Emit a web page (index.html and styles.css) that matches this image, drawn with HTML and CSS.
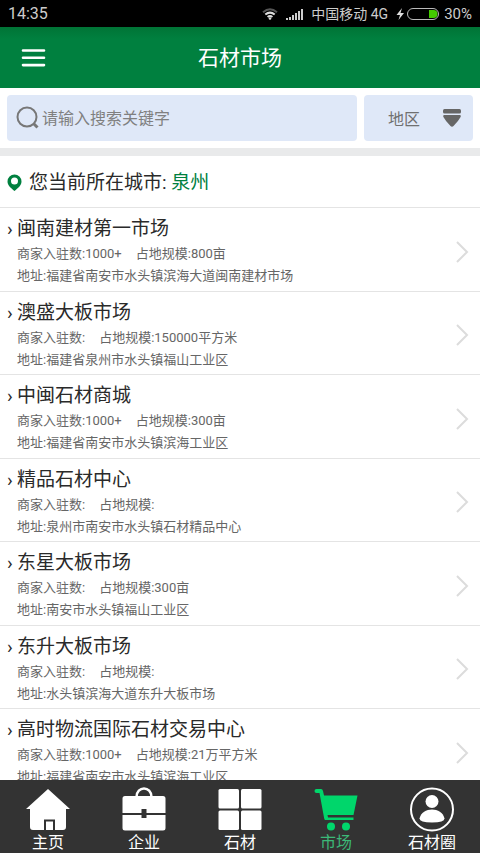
FILE: index.html
```html
<!DOCTYPE html>
<html lang="zh-CN">
<head>
<meta charset="utf-8">
<meta name="viewport" content="width=device-width, initial-scale=1">
<title>石材市场</title>
<link rel="stylesheet" href="styles.css">
</head>
<body>
<div class="status">
  <span class="time">14:35</span>
  <svg class="wifi" width="16" height="12" viewBox="0 0 16 12" fill="none" stroke-width="2">
    <path d="M1 4.200Q8-1.800 15 4.200" stroke="#555"/>
    <path d="M3.300 6.600Q8 2.600 12.700 6.600M5.600 9Q8 7 10.400 9" stroke="#ddd"/>
    <circle cx="8" cy="10.500" r="1.300" fill="#ddd"/>
  </svg>
  <svg class="signal" width="17" height="12" viewBox="0 0 17 12" fill="#ccc">
    <path d="M0 10h2v2H0zM3 9h2v3H3zM6 7h2v5H6zM9 5h2v7H9zM12 3h2v9h-2zM15 1h2v11h-2z"/>
  </svg>
  <span class="carrier">中国移动 4G</span>
  <svg class="battery" width="44" height="14" viewBox="0 0 44 14">
    <path d="M6 1L0.500 8H4L2.500 13L8 6H4.500z" fill="#ddd"/>
    <rect x="11.500" y="1.500" width="31" height="11" rx="5.500" fill="none" stroke="#bbb"/>
    <path d="M33 3h4.500a4 4 0 0 1 0 8H33z" fill="#4c0"/>
  </svg>
  <span>30%</span>
</div>
<header class="header">
  <button class="menu" type="button" aria-label="菜单">
    <svg width="24" height="18" viewBox="0 0 24 18" stroke="#fff" stroke-width="2.600" stroke-linecap="round"><path d="M1 1.500h21M1 8.800h21M1 16.100h21"/></svg>
  </button>
  <h1>石材市场</h1>
</header>
<form class="search">
  <label class="field">
    <svg width="24" height="24" viewBox="0 0 24 24" fill="none" stroke="#777" stroke-width="2"><circle cx="11" cy="11" r="9.500"/><path d="M17.500 17.500L21.500 21.500" stroke-width="3"/></svg>
    <input type="search" placeholder="请输入搜索关键字" aria-label="请输入搜索关键字">
  </label>
  <button class="region" type="button">
    <span>地区</span>
    <svg width="18" height="18" viewBox="0 0 18 18" fill="#666"><rect width="18" height="4.400" rx="1.500"/><path d="M1 6H17Q18.500 6.300 17.600 8Q15.500 12 10.500 17Q9 18.500 7.500 17Q2.500 12 0.400 8Q-0.500 6.300 1 6z"/></svg>
  </button>
</form>
<main class="main">
  <p class="city">
    <svg width="15" height="18" viewBox="0 0 15 18"><path fill="#00803f" fill-rule="evenodd" d="M7.500 .5A7 7 0 0 0 .5 7.500C.5 11.500 4 14 7.500 17C11 14 14.500 11.500 14.500 7.500A7 7 0 0 0 7.500 .5zM7.500 3.500a3.500 3.500 0 1 1 0 7a3.500 3.500 0 0 1 0-7z"/></svg>
    <span>您当前所在城市: <a href="#city">泉州</a></span>
  </p>
  <ul class="list">
    <li><a class="item" href="#1"><span class="mark">›</span><span class="info"><strong>闽南建材第一市场</strong><span class="stats"><span>商家入驻数:1000+</span><span>占地规模:800亩</span></span><span>地址:福建省南安市水头镇滨海大道闽南建材市场</span></span><svg class="go" width="14" height="24" viewBox="0 0 14 24"><path d="M2 2L12 12L2 22"/></svg></a></li>
    <li><a class="item" href="#2"><span class="mark">›</span><span class="info"><strong>澳盛大板市场</strong><span class="stats"><span>商家入驻数:</span><span>占地规模:150000平方米</span></span><span>地址:福建省泉州市水头镇福山工业区</span></span><svg class="go" width="14" height="24" viewBox="0 0 14 24"><path d="M2 2L12 12L2 22"/></svg></a></li>
    <li><a class="item" href="#3"><span class="mark">›</span><span class="info"><strong>中闽石材商城</strong><span class="stats"><span>商家入驻数:1000+</span><span>占地规模:300亩</span></span><span>地址:福建省南安市水头镇滨海工业区</span></span><svg class="go" width="14" height="24" viewBox="0 0 14 24"><path d="M2 2L12 12L2 22"/></svg></a></li>
    <li><a class="item" href="#4"><span class="mark">›</span><span class="info"><strong>精品石材中心</strong><span class="stats"><span>商家入驻数:</span><span>占地规模:</span></span><span>地址:泉州市南安市水头镇石材精品中心</span></span><svg class="go" width="14" height="24" viewBox="0 0 14 24"><path d="M2 2L12 12L2 22"/></svg></a></li>
    <li><a class="item" href="#5"><span class="mark">›</span><span class="info"><strong>东星大板市场</strong><span class="stats"><span>商家入驻数:</span><span>占地规模:300亩</span></span><span>地址:南安市水头镇福山工业区</span></span><svg class="go" width="14" height="24" viewBox="0 0 14 24"><path d="M2 2L12 12L2 22"/></svg></a></li>
    <li><a class="item" href="#6"><span class="mark">›</span><span class="info"><strong>东升大板市场</strong><span class="stats"><span>商家入驻数:</span><span>占地规模:</span></span><span>地址:水头镇滨海大道东升大板市场</span></span><svg class="go" width="14" height="24" viewBox="0 0 14 24"><path d="M2 2L12 12L2 22"/></svg></a></li>
    <li><a class="item" href="#7"><span class="mark">›</span><span class="info"><strong>高时物流国际石材交易中心</strong><span class="stats"><span>商家入驻数:1000+</span><span>占地规模:21万平方米</span></span><span>地址:福建省南安市水头镇滨海工业区</span></span><svg class="go" width="14" height="24" viewBox="0 0 14 24"><path d="M2 2L12 12L2 22"/></svg></a></li>
  </ul>
</main>
<nav class="tabs">
  <a href="#home"><svg width="44" height="44" viewBox="0 0 44 44"><path fill="#fff" fill-rule="evenodd" d="M22 1L44 21H40V39Q40 42 37 42H29V31.500H18V42H7Q4 42 4 39V21H0zM20 33.500H27V42H20z"/></svg><span>主页</span></a>
  <a href="#company"><svg width="44" height="44" viewBox="0 0 44 44"><path fill="none" stroke="#fff" stroke-width="2.500" d="M14.500 9C14.500-2.500 29.500-2.500 29.500 9"/><path fill="#fff" d="M3 8H41Q43.500 8 43.500 10.500V25H24.500V21H19.500V25H.5V10.500Q.5 8 3 8zM.5 27H19.500V30H24.500V27H43.500V40Q43.500 42.500 41 42.500H3Q.5 42.500 .5 40z"/></svg><span>企业</span></a>
  <a href="#stone"><svg width="44" height="44" viewBox="0 0 44 44" fill="#fff"><rect x=".5" y="1" width="20.500" height="19.500" rx="1.500"/><rect x="23" y="1" width="20.500" height="19.500" rx="1.500"/><rect x=".5" y="22.500" width="20.500" height="19.500" rx="1.500"/><rect x="23" y="22.500" width="20.500" height="19.500" rx="1.500"/></svg><span>石材</span></a>
  <a class="active" href="#market" aria-current="page"><svg width="44" height="44" viewBox="0 0 44 44" fill="#00d66b"><path d="M2.500 1H7Q8.500 1 9 3L10 7.500H43.500L39.500 27H13.500L14 29.500H39.500V32H11.500Q10.500 32 10.200 30.500L5.500 5H2.500Q.5 5 .5 3T2.500 1z"/><circle cx="17" cy="38.500" r="4"/><circle cx="32" cy="38.500" r="4"/></svg><span>市场</span></a>
  <a href="#circle"><svg width="44" height="44" viewBox="0 0 44 44" fill="#fff"><circle cx="22" cy="21.500" r="21" fill="none" stroke="#fff" stroke-width="2"/><circle cx="22" cy="13.500" r="6.500"/><path d="M9.500 30.500C12 18.500 32 18.500 34.500 30.500Q34.500 34.500 22 34.500T9.500 30.500z"/></svg><span>石材圈</span></a>
</nav>
</body>
</html>
```
FILE: styles.css
```css
* { box-sizing: border-box; }

body {
  margin: 0;
  height: 100vh;
  display: flex;
  flex-direction: column;
  background: #fff;
  color: #2a2a2a;
  font-family: Roboto, "Noto Sans CJK SC", sans-serif;
}

a { color: inherit; text-decoration: none; }
button, input { font: inherit; border: 0; padding: 0; background: none; }
svg { display: block; flex: none; overflow: visible; }

.status {
  flex: none;
  height: 27px;
  padding: 0 8px;
  display: flex;
  align-items: center;
  background: #000;
  color: #ccc;
  font-size: 15px;
  line-height: 20px;
}
.time { margin-right: auto; font-size: 16px; }
.signal { margin: 0 8px; }
.carrier { font-size: 14px; }
.battery { margin: 0 4px 0 8px; }

.header {
  flex: none;
  height: 61px;
  padding: 0 22px;
  display: grid;
  grid-template-columns: 24px 1fr 24px;
  align-items: center;
  background: linear-gradient(#007436, #00803f 12px);
  color: #fff;
}
.header h1 {
  margin: 0;
  font-size: 21px;
  font-weight: 400;
  line-height: 32px;
  text-align: center;
}

.search {
  flex: none;
  margin: 0;
  padding: 7px;
  display: grid;
  grid-template-columns: 350fr 109fr;
  gap: 7px;
  font-size: 16px;
}
.field, .region {
  height: 46px;
  display: flex;
  align-items: center;
  border-radius: 4px;
  background: #dfe8f8;
}
.field { padding: 0 9px; gap: 2px; }
.field input { flex: 1; min-width: 0; outline: 0; }
.field input::placeholder { color: #808080; }
.region {
  padding: 0 12px 0 24px;
  justify-content: space-between;
  color: #707070;
}

.main {
  flex: 1;
  min-height: 0;
  overflow: hidden;
  border-top: 8px solid #e9eaeb;
}

.city {
  margin: 0;
  height: 51px;
  padding: 2px 7px 0;
  display: flex;
  align-items: center;
  gap: 7px;
  font-size: 19px;
  line-height: 28px;
}
.city a { color: #00803f; }

.list { margin: 0; padding: 0; list-style: none; }
.item {
  min-height: 83px;
  padding: 7px 11px 3px 7px;
  display: flex;
  align-items: flex-start;
  border-top: 1px solid #e4e4e4;
  color: #666;
  font-size: 13px;
  line-height: 22px;
}
li:nth-child(odd) .item { min-height: 84px; }
.mark {
  width: 10px;
  color: #2a2a2a;
  font-size: 19px;
  line-height: 28px;
}
.info { flex: 1; display: flex; flex-direction: column; }
.info strong { color: #2a2a2a; font-size: 19px; font-weight: 400; line-height: 28px; }
.stats { display: flex; gap: 14px; }
.go { align-self: center; fill: none; stroke: #dcdcdc; stroke-width: 2; }

.tabs {
  flex: none;
  height: 73px;
  padding-top: 8px;
  display: grid;
  grid-template-columns: repeat(5, 1fr);
  background: #333;
  color: #fff;
  font-size: 16px;
  line-height: 21px;
}
.tabs a { display: flex; flex-direction: column; align-items: center; }
.tabs .active { color: #3cb878; }
```
